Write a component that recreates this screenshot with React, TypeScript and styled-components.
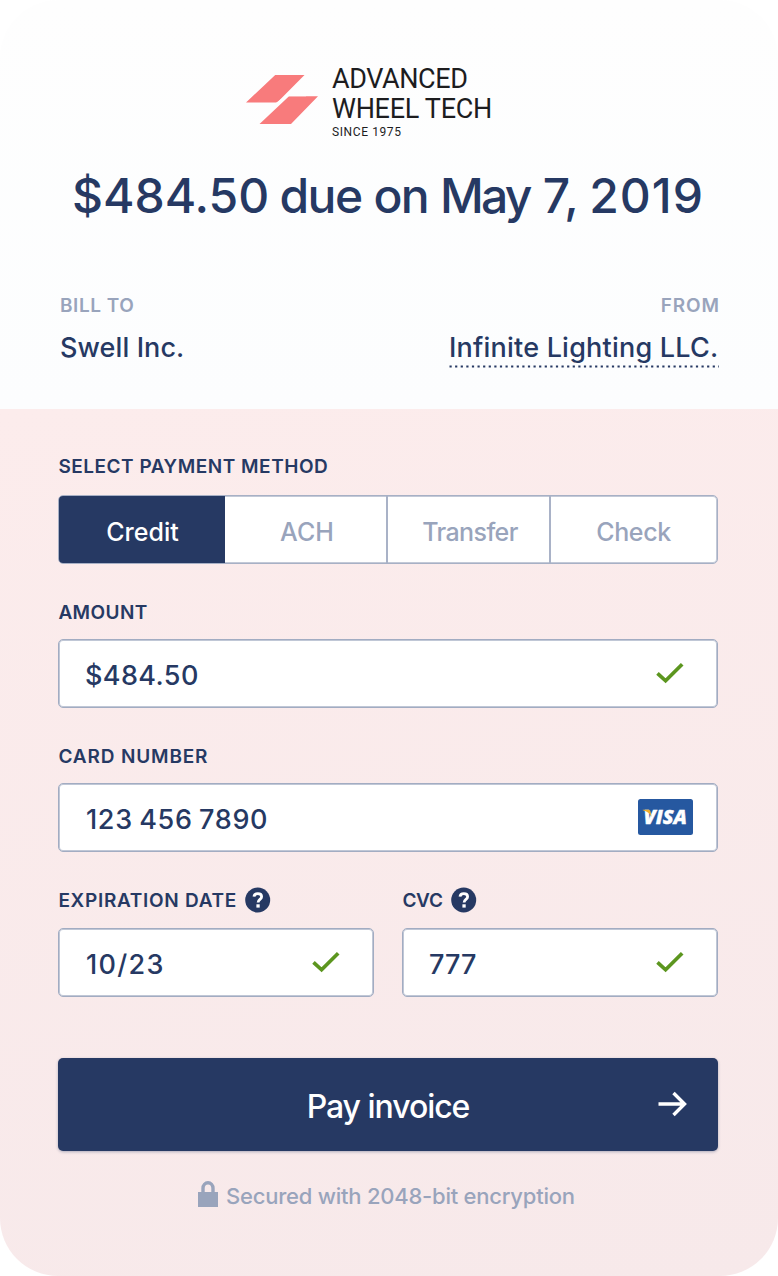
import React from "react";
import styled, { createGlobalStyle } from "styled-components";

const navy = "#263963";
const muted = "#99a4bc";
const green = "#5c961f";

const GlobalStyle = createGlobalStyle`
  * { box-sizing: border-box; }
  body {
    margin: 0;
    background: #fff;
    font-family: Inter, "Liberation Sans", sans-serif;
    font-weight: 500;
    color: ${navy};
  }
`;

const Card = styled.main`
  width: 778px;
  height: 1276px;
  border-radius: 58px;
  overflow: hidden;
`;

const Header = styled.header`
  height: 409px;
  padding: 64px 59px 0 60px;
  background: linear-gradient(#fefefe, #fcfdfe);
`;

const Brand = styled.div`
  display: flex;
  height: 78px;
  padding-left: 186px;
`;

const BrandMark = styled.svg`
  width: 72px;
  height: 50px;
  margin: 11px 14px 0 0;
`;

const BrandLine = styled.div<{ $spacing: number; $small?: boolean }>`
  font-family: Roboto, sans-serif;
  font-weight: 400;
  font-size: ${(p) => (p.$small ? 12 : 27)}px;
  line-height: ${(p) => (p.$small ? 17 : 30)}px;
  letter-spacing: ${(p) => p.$spacing}px;
  color: #1d1d1f;
  white-space: nowrap;
`;

const Title = styled.h1`
  margin: 24px 0 0 12px;
  font-size: 48px;
  font-weight: 500;
  line-height: 60px;
  letter-spacing: -0.77px;
  word-spacing: -1px;
  white-space: nowrap;
`;

const Word = styled.span<{ $spacing: number }>`
  letter-spacing: ${(p) => p.$spacing}px;
  margin-right: ${(p) => -p.$spacing - 0.77}px;
`;

const Parties = styled.div`
  display: flex;
  justify-content: space-between;
  margin-top: 65px;
`;

const Party = styled.div<{ $end?: boolean }>`
  display: flex;
  flex-direction: column;
  align-items: ${(p) => (p.$end ? "flex-end" : "flex-start")};
`;

const PartyLabel = styled.div<{ $spacing: number }>`
  margin-right: -1px;
  font-size: 19px;
  font-weight: 600;
  line-height: 30px;
  letter-spacing: ${(p) => p.$spacing}px;
  color: ${muted};
`;

const PartyName = styled.div`
  margin-top: 7px;
  font-size: 27px;
  line-height: 40px;
  letter-spacing: 0.1px;
`;

const PartyLink = styled.a`
  display: flex;
  flex-direction: column;
  width: 270px;
  margin-top: 7px;
  font-size: 27px;
  line-height: 40px;
  letter-spacing: 0.21px;
  white-space: nowrap;
`;

const Dots = styled.svg`
  width: 270px;
  height: 3px;
  margin-top: -3px;
`;

const Body = styled.form`
  height: 867px;
  padding: 42px 60px 0 58px;
  background: linear-gradient(170deg, #fcecec, #f7e9ea);
`;

const Field = styled.div`
  flex: 1;
`;

const Label = styled.div<{ $spacing: number; $gap?: number }>`
  display: flex;
  align-items: center;
  gap: 8px;
  height: 30px;
  margin-bottom: ${(p) => p.$gap ?? 12}px;
  padding-left: 0.4px;
  font-size: 19px;
  font-weight: 600;
  letter-spacing: ${(p) => p.$spacing}px;
  white-space: nowrap;
`;

const Tabs = styled.div`
  display: grid;
  grid-template-columns: 166px 163px 163px 166px;
  height: 69px;
  border-radius: 5px;
  overflow: hidden;
  background: #fff;
  margin-bottom: 33px;
  border: 1px solid #a7b0c5;
  box-shadow: inset 0 0 0 1px #c3c9d7;
  width: 660px;
`;

const Tab = styled.button<{ $active?: boolean; $spacing: number }>`
  margin: ${(p) => (p.$active ? "-1px 0 -1px -1px" : "0")};
  padding: 5px 0 0 ${(p) => (p.$active ? 2 : 3)}px;
  border: 0;
  border-right: ${(p) => (p.$active ? "0" : "2px solid #a9b2c7")};
  background: ${(p) => (p.$active ? navy : "transparent")};
  color: ${(p) => (p.$active ? "#fff" : muted)};
  font: inherit;
  font-size: 25px;
  letter-spacing: ${(p) => p.$spacing}px;

  &:last-child {
    padding-left: 0;
    padding-right: 1px;
    border-right: 0;
  }
`;

const Box = styled.div`
  display: flex;
  align-items: center;
  justify-content: space-between;
  height: 69px;
  padding: 0 24px 0 26px;
  border: 1px solid #a2acc2;
  border-radius: 5px;
  background: #fff;
  box-shadow: inset 0 0 0 1px #c0c7d6;
`;

const Value = styled.span<{ $spacing: number; $indent?: number }>`
  padding-top: 5px;
  padding-left: ${(p) => p.$indent ?? 0}px;
  font-size: 27px;
  line-height: 36px;
  letter-spacing: ${(p) => p.$spacing}px;
  word-spacing: -1.4px;
`;

const FieldGroup = styled.div<{ $after: number }>`
  display: flex;
  gap: 28px;
  margin-bottom: ${(p) => p.$after}px;
`;

const CheckSvg = styled.svg`
  width: 28px;
  height: 22px;
  margin: 0 9px 1px 0;
`;

const HelpSvg = styled.svg`
  width: 26px;
  height: 26px;
`;

const CardBrand = styled.svg`
  width: 55px;
  height: 36px;
  margin-bottom: 2px;
`;

const PayButton = styled.button`
  display: grid;
  grid-template-columns: 1fr auto 1fr;
  align-items: center;
  width: 660px;
  height: 93px;
  padding: 0 30px;
  border: 0;
  border-radius: 5px;
  background: ${navy};
  color: #fff;
  font: inherit;
  font-size: 32px;
  letter-spacing: -1.05px;
  box-shadow: 0 1px 3px rgba(38, 57, 99, 0.35);
`;

const PayText = styled.span`
  grid-column: 2;
  padding-top: 4px;
`;

const Arrow = styled.svg`
  justify-self: end;
  width: 30px;
  height: 26px;
  margin-bottom: 1px;
`;

const Secured = styled.div`
  display: flex;
  align-items: center;
  height: 30px;
  margin: 30px 0 0 140px;
  font-size: 22px;
  letter-spacing: -0.23px;
  color: ${muted};
  white-space: nowrap;
`;

const Lock = styled.svg`
  width: 20px;
  height: 26px;
  margin: 0 8px 4px 0;
`;

const Check = () => (
  <CheckSvg viewBox="0 0 28 22">
    <path d="M1.5 11.3 9.6 18.8 26.2 2.3" fill="none" stroke={green} strokeWidth="3.7" />
  </CheckSvg>
);

const Help = () => (
  <HelpSvg viewBox="0 0 26 26">
    <circle cx="12.7" cy="13" r="12.5" fill={navy} />
    <path
      d="M9 9.7C9.2 7.7 10.7 6.7 12.8 6.7c2.2 0 3.8 1.1 3.8 3 0 2.7-3.5 2.7-3.5 5.8"
      fill="none"
      stroke="#fff"
      strokeWidth="2.8"
    />
    <rect x="11.4" y="17.3" width="3.3" height="3.3" fill="#fff" />
  </HelpSvg>
);

export default function App() {
  return (
    <>
      <GlobalStyle />
      <Card>
        <Header>
          <Brand>
            <BrandMark viewBox="0 0 72 50">
              <path d="M29.2 0H58.5L31.2 27.5H0ZM43 21.3H72L45 49H13.5Z" fill="#f87b7c" />
              <path d="M30.5 28.3 41.5 20.5H60" fill="none" stroke="#fefefe" strokeWidth="1.4" />
            </BrandMark>
            <div>
              <BrandLine $spacing={-0.4}>ADVANCED</BrandLine>
              <BrandLine $spacing={-0.3}>WHEEL TECH</BrandLine>
              <BrandLine $small $spacing={0.6}>SINCE 1975</BrandLine>
            </div>
          </Brand>
          <Title>
            <Word $spacing={-0.02}>$484.50</Word> <Word $spacing={-1.5}>due</Word>{" "}
            <Word $spacing={-1.6}>on</Word> <Word $spacing={-2.7}>May</Word>{" "}
            <Word $spacing={0.2}>7,</Word> <Word $spacing={1}>2019</Word>
          </Title>
          <Parties>
            <Party>
              <PartyLabel $spacing={0.55}>BILL TO</PartyLabel>
              <PartyName>Swell Inc.</PartyName>
            </Party>
            <Party $end>
              <PartyLabel $spacing={0.9}>FROM</PartyLabel>
              <PartyLink>
                Infinite Lighting LLC.
                <Dots viewBox="0 0 270 3">
                  <path d="M0.5 1.5H270" stroke={navy} strokeWidth="2.2" strokeDasharray="2.2 3.4" />
                </Dots>
              </PartyLink>
            </Party>
          </Parties>
        </Header>
        <Body>
          <Label $spacing={0.52} $gap={14}>SELECT PAYMENT METHOD</Label>
          <Tabs>
            <Tab type="button" $active $spacing={0}>Credit</Tab>
            <Tab type="button" $spacing={0}>ACH</Tab>
            <Tab type="button" $spacing={-0.6}>Transfer</Tab>
            <Tab type="button" $spacing={-0.35}>Check</Tab>
          </Tabs>
          <FieldGroup $after={33}>
            <Field>
              <Label $spacing={0.4}>AMOUNT</Label>
              <Box>
                <Value $spacing={0.4}>$484.50</Value>
                <Check />
              </Box>
            </Field>
          </FieldGroup>
          <FieldGroup $after={33}>
            <Field>
              <Label $spacing={0.85}>CARD NUMBER</Label>
              <Box>
                <Value $spacing={0.66} $indent={1}>123 456 7890</Value>
                <CardBrand viewBox="0 0 55 36">
                  <rect width="55" height="36" rx="2.5" fill="#2658a0" />
                  <text
                    x="5.5"
                    y="25.3"
                    fill="#fff"
                    stroke="#fff"
                    strokeWidth="0.4"
                    fontFamily="Open Sans, sans-serif"
                    fontSize="20"
                    fontWeight="800"
                    fontStyle="italic"
                    textLength="43.5"
                    lengthAdjust="spacingAndGlyphs"
                  >
                    VISA
                  </text>
                  <path
                    d="M4.8 10.7H10C11.500 10.7 12.200 11.300 12.500 12.500L13.500 18C12 14.600 9.300 12.200 4.800 11.300Z"
                    fill="#f0ad2d"
                  />
                </CardBrand>
              </Box>
            </Field>
          </FieldGroup>
          <FieldGroup $after={61}>
            <Field>
              <Label $spacing={0.7} $gap={13}>
                EXPIRATION DATE
                <Help />
              </Label>
              <Box>
                <Value $spacing={1.3} $indent={1}>10/23</Value>
                <Check />
              </Box>
            </Field>
            <Field>
              <Label $spacing={-0.3} $gap={13}>
                CVC
                <Help />
              </Label>
              <Box>
                <Value $spacing={0}>777</Value>
                <Check />
              </Box>
            </Field>
          </FieldGroup>
          <PayButton type="button">
            <PayText>Pay invoice</PayText>
            <Arrow viewBox="0 0 30 26">
              <path d="M0.5 13H26M15.5 2 26.5 13 15.5 24" fill="none" stroke="#fff" strokeWidth="3.4" />
            </Arrow>
          </PayButton>
          <Secured>
            <Lock viewBox="0 0 20 26">
              <path d="M0 11H20V26H0Z" fill={muted} />
              <path d="M5 13V7.2a5 5.500 0 0 1 10 0V13" fill="none" stroke={muted} strokeWidth="3.4" />
            </Lock>
            Secured with 2048-bit encryption
          </Secured>
        </Body>
      </Card>
    </>
  );
}
